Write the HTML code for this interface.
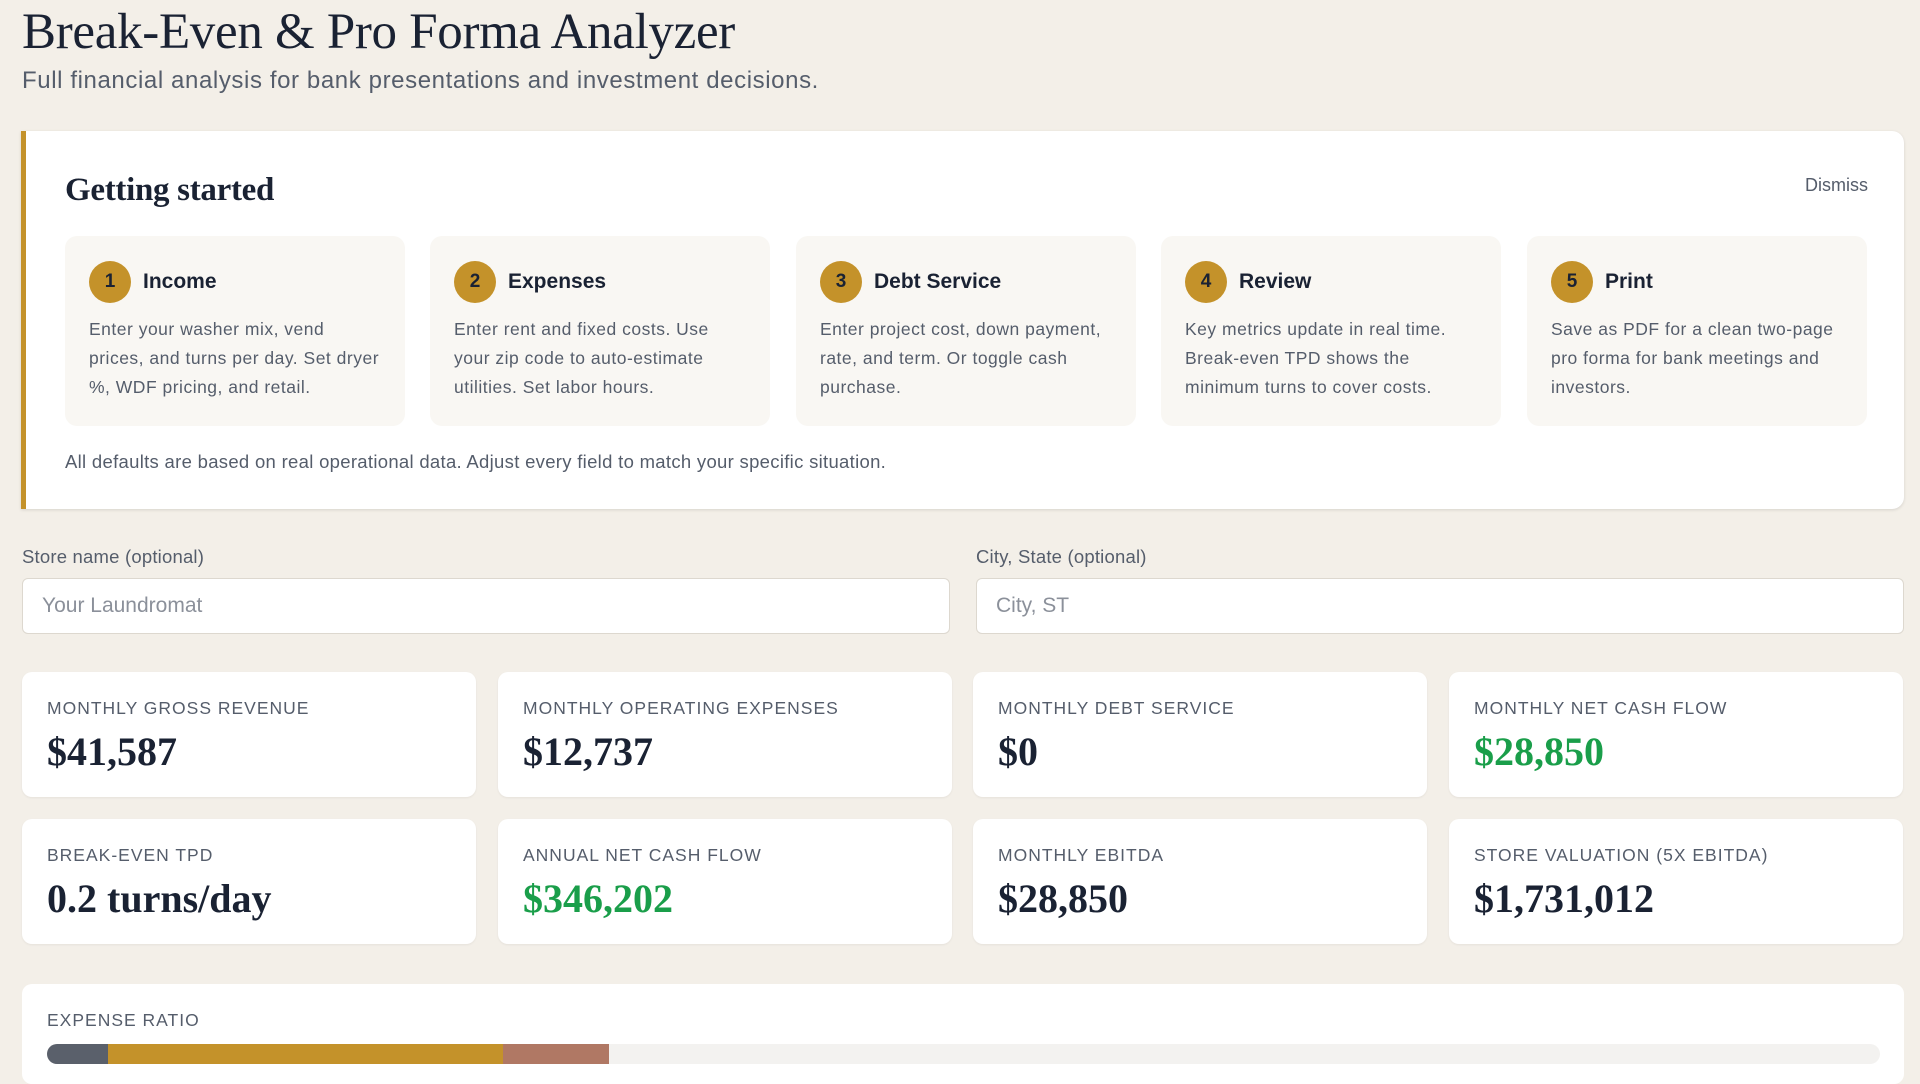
<!DOCTYPE html>
<html><head><meta charset="utf-8"><style>
*{box-sizing:border-box;margin:0;padding:0}
body{width:1920px;height:1058px;overflow:hidden;background:#f3efe8;font-family:"Liberation Sans",sans-serif;color:#1a2233;position:relative}
.abs{position:absolute}
h1{position:absolute;left:22px;top:3px;font-family:"Liberation Serif",serif;font-weight:400;font-size:51px;letter-spacing:-0.3px;color:#1a2233}
.sub{left:22px;top:67px;font-size:24px;letter-spacing:0.6px;color:#555d6b}
.gs{left:21px;top:131px;width:1883px;height:378px;background:#fff;border-left:5px solid #c4922a;border-radius:0 12px 12px 0;box-shadow:0 1px 3px rgba(0,0,0,.12)}
.gs h2{position:absolute;left:39px;top:41px;font-family:"Liberation Serif",serif;font-size:33px;font-weight:700;color:#1a2233;letter-spacing:-0.3px}
.dismiss{position:absolute;right:36px;top:44px;font-size:18px;color:#555d6b}
.step{position:absolute;top:105px;width:340px;height:190px;background:#f9f7f3;border-radius:12px}
.circ{position:absolute;left:24px;top:25px;width:42px;height:42px;border-radius:50%;background:#c4922a;color:#1a2233;font-size:19px;font-weight:700;text-align:center;line-height:42px}
.st{position:absolute;left:78px;top:34px;font-size:21px;font-weight:700}
.sd{position:absolute;left:24px;top:79px;width:292px;font-size:17.5px;letter-spacing:0.5px;line-height:29px;color:#555d6b}
.note{position:absolute;left:39px;top:320px;font-size:18.5px;letter-spacing:0.3px;color:#555d6b}
.lbl{font-size:18.5px;letter-spacing:0.2px;color:#555d6b}
.inp{height:56px;background:#fff;border:1px solid #ddd8cf;border-radius:6px;font-size:21px;color:#8b909a;padding:15px 19px}
.card{position:absolute;width:454px;height:125px;background:#fff;border-radius:10px;box-shadow:0 1px 2px rgba(0,0,0,.06)}
.card .l{position:absolute;left:25px;top:26px;font-size:17.5px;letter-spacing:1px;color:#555d6b}
.card .v{position:absolute;left:25px;top:56px;font-family:"Liberation Serif",serif;font-weight:700;font-size:40px;color:#1a2233}
.g{color:#1a9e4a!important}
</style></head><body>
<h1>Break-Even &amp; Pro Forma Analyzer</h1>
<div class="abs sub">Full financial analysis for bank presentations and investment decisions.</div>
<div class="abs gs">
<h2>Getting started</h2><div class="dismiss">Dismiss</div>
<div class="step" style="left:39px"><div class="circ">1</div><div class="st">Income</div><div class="sd">Enter your washer mix, vend prices, and turns per day. Set dryer %, WDF pricing, and retail.</div></div>
<div class="step" style="left:404px"><div class="circ">2</div><div class="st">Expenses</div><div class="sd">Enter rent and fixed costs. Use your zip code to auto-estimate utilities. Set labor hours.</div></div>
<div class="step" style="left:770px"><div class="circ">3</div><div class="st">Debt Service</div><div class="sd">Enter project cost, down payment, rate, and term. Or toggle cash purchase.</div></div>
<div class="step" style="left:1135px"><div class="circ">4</div><div class="st">Review</div><div class="sd">Key metrics update in real time. Break-even TPD shows the minimum turns to cover costs.</div></div>
<div class="step" style="left:1501px"><div class="circ">5</div><div class="st">Print</div><div class="sd">Save as PDF for a clean two-page pro forma for bank meetings and investors.</div></div>
<div class="note">All defaults are based on real operational data. Adjust every field to match your specific situation.</div>
</div>
<div class="abs lbl" style="left:22px;top:546px">Store name (optional)</div>
<div class="abs lbl" style="left:976px;top:546px">City, State (optional)</div>
<div class="abs inp" style="left:22px;top:578px;width:928px">Your Laundromat</div>
<div class="abs inp" style="left:976px;top:578px;width:928px">City, ST</div>
<div class="card" style="left:22px;top:672px"><div class="l">MONTHLY GROSS REVENUE</div><div class="v">$41,587</div></div>
<div class="card" style="left:498px;top:672px"><div class="l">MONTHLY OPERATING EXPENSES</div><div class="v">$12,737</div></div>
<div class="card" style="left:973px;top:672px"><div class="l">MONTHLY DEBT SERVICE</div><div class="v">$0</div></div>
<div class="card" style="left:1449px;top:672px"><div class="l">MONTHLY NET CASH FLOW</div><div class="v g">$28,850</div></div>
<div class="card" style="left:22px;top:819px"><div class="l">BREAK-EVEN TPD</div><div class="v">0.2 turns/day</div></div>
<div class="card" style="left:498px;top:819px"><div class="l">ANNUAL NET CASH FLOW</div><div class="v g">$346,202</div></div>
<div class="card" style="left:973px;top:819px"><div class="l">MONTHLY EBITDA</div><div class="v">$28,850</div></div>
<div class="card" style="left:1449px;top:819px"><div class="l">STORE VALUATION (5X EBITDA)</div><div class="v">$1,731,012</div></div>
<div class="abs" style="left:22px;top:984px;width:1882px;height:100px;background:#fff;border-radius:10px">
<div class="abs" style="left:25px;top:26px;font-size:17.5px;letter-spacing:1px;color:#555d6b">EXPENSE RATIO</div>
<div class="abs" style="left:25px;top:60px;width:1833px;height:20px;background:#f3f2f0;border-radius:10px;overflow:hidden">
<div class="abs" style="left:0;top:0;width:61px;height:20px;background:#5a606b"></div>
<div class="abs" style="left:61px;top:0;width:395px;height:20px;background:#c4922a"></div>
<div class="abs" style="left:456px;top:0;width:106px;height:20px;background:#b07864"></div>
</div></div>
</body></html>
